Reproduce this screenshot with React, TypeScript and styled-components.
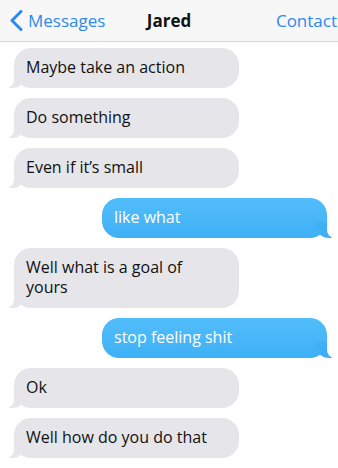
import React from "react";
import styled, { createGlobalStyle, css } from "styled-components";

const GlobalStyle = createGlobalStyle`
  html, body { margin: 0; padding: 0; background: #ffffff; }
  body { font-family: "Open Sans", "Noto Sans", sans-serif; -webkit-font-smoothing: antialiased; }
  * { box-sizing: border-box; }
`;

const Screen = styled.div`
  width: 338px;
  height: 468px;
  overflow: hidden;
  background: #ffffff;
  display: flex;
  flex-direction: column;
`;

const NavBar = styled.header`
  height: 42px;
  flex-shrink: 0;
  background: #f7f7f7;
  border-bottom: 1px solid #d6d6d6;
  display: grid;
  grid-template-columns: 1fr auto 1fr;
  align-items: center;
  font-size: 17px;
  line-height: 22px;
`;

const BackButton = styled.div`
  display: flex;
  align-items: center;
  gap: 5px;
  padding-left: 9px;
  color: #2a8af2;
`;

const Title = styled.div`
  font-weight: 700;
  color: #111111;
`;

const RightAction = styled.div`
  justify-self: end;
  color: #2a8af2;
  white-space: nowrap;
  margin-right: 1px;
`;

const Thread = styled.main`
  display: flex;
  flex-direction: column;
  gap: 10px;
  padding: 6px 0 0;
`;

const Bubble = styled.div<{ $mine?: boolean }>`
  position: relative;
  width: 225px;
  padding: 9px 12px 11px;
  border-radius: 17px;
  font-size: 16px;
  line-height: 20px;

  &::before,
  &::after {
    content: "";
    position: absolute;
    bottom: 0;
    height: 16px;
  }

  ${({ $mine }) =>
    $mine
      ? css`
          align-self: flex-end;
          margin-right: 11px;
          color: #ffffff;
          background: linear-gradient(#52bdfb, #3fb0f6);
          &::before {
            right: -5px;
            width: 16px;
            background: #3fb0f6;
            border-bottom-left-radius: 13px 12px;
          }
          &::after {
            right: -8px;
            width: 8px;
            background: #ffffff;
            border-bottom-left-radius: 8px;
          }
        `
      : css`
          align-self: flex-start;
          margin-left: 14px;
          color: #111111;
          background: #e5e5ea;
          &::before {
            left: -5px;
            width: 16px;
            background: #e5e5ea;
            border-bottom-right-radius: 13px 12px;
          }
          &::after {
            left: -8px;
            width: 8px;
            background: #ffffff;
            border-bottom-right-radius: 8px;
          }
        `}
`;

const messages: { text: string; mine?: boolean }[] = [
  { text: "Maybe take an action" },
  { text: "Do something" },
  { text: "Even if it’s small" },
  { text: "like what", mine: true },
  { text: "Well what is a goal of yours" },
  { text: "stop feeling shit", mine: true },
  { text: "Ok" },
  { text: "Well how do you do that" },
];

export default function App() {
  return (
    <>
      <GlobalStyle />
      <Screen>
        <NavBar>
          <BackButton>
            <svg width="14" height="21" viewBox="0 0 14 21">
              <path
                d="M12 1.5 L3 10.5 L12 19.5"
                fill="none"
                stroke="#2a8af2"
                strokeWidth="3"
                strokeLinecap="round"
                strokeLinejoin="round"
              />
            </svg>
            <span>Messages</span>
          </BackButton>
          <Title>Jared</Title>
          <RightAction>Contact</RightAction>
        </NavBar>
        <Thread>
          {messages.map((m, i) => (
            <Bubble key={i} $mine={m.mine}>
              {m.text}
            </Bubble>
          ))}
        </Thread>
      </Screen>
    </>
  );
}
